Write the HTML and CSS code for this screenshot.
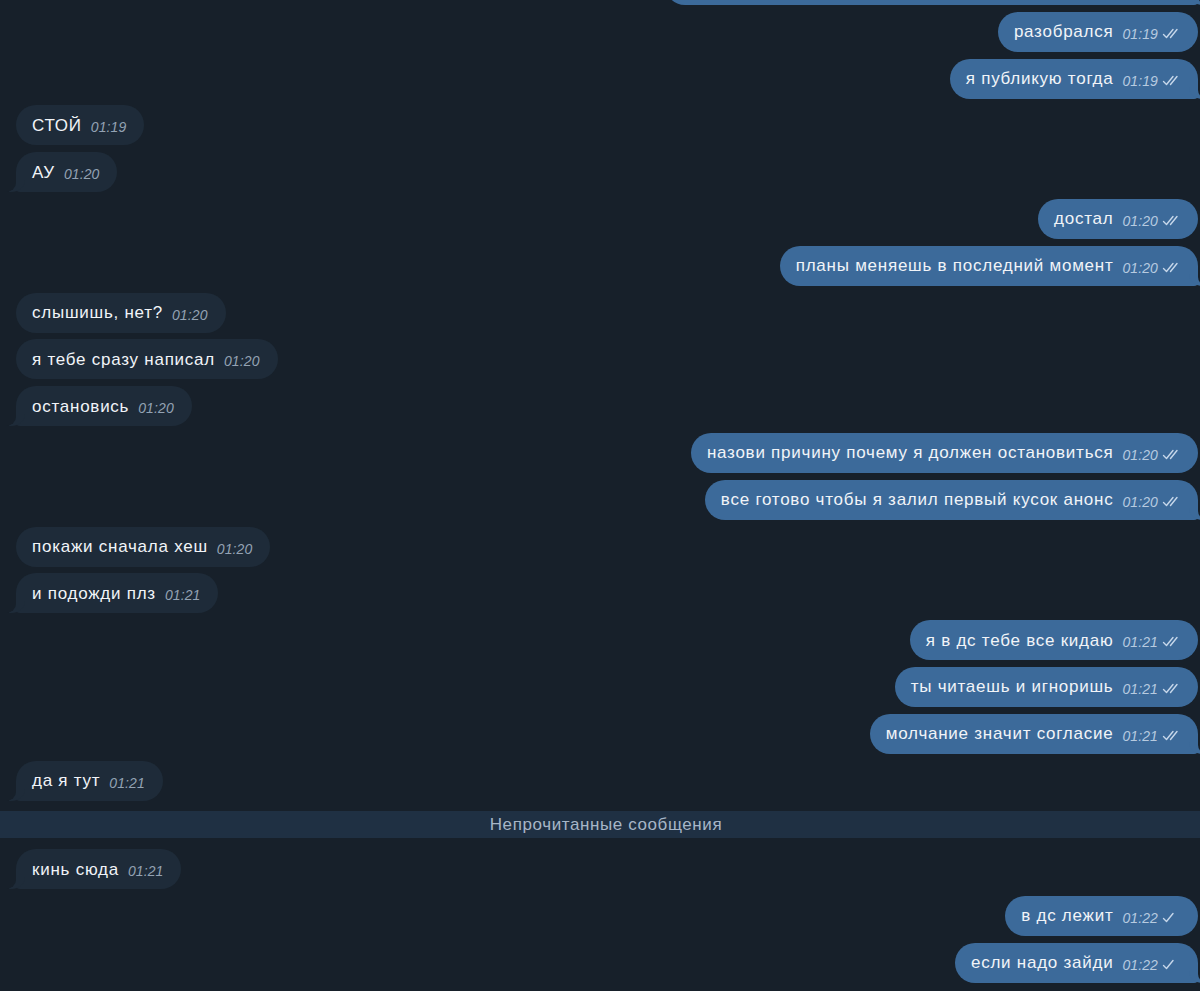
FILE: index.html
```html
<!DOCTYPE html>
<html lang="ru">
<head>
<meta charset="utf-8">
<link rel="stylesheet" href="styles.css">
</head>
<body>
<div class="chat">
  <div class="row out"><div class="bubble partial tail"></div></div>
  <div class="row out"><div class="bubble"><span class="text">разобрался</span><span class="meta"><span class="time">01:19</span><svg class="check" viewBox="0 0 18 12"><path d="M1.5 6.5 L4.5 9.5 L11 1.5"/><path d="M8.5 9.5 L15 1.5"/></svg></span></div></div>
  <div class="row out"><div class="bubble tail"><span class="text">я публикую тогда</span><span class="meta"><span class="time">01:19</span><svg class="check" viewBox="0 0 18 12"><path d="M1.5 6.5 L4.5 9.5 L11 1.5"/><path d="M8.5 9.5 L15 1.5"/></svg></span></div></div>
  <div class="row in"><div class="bubble"><span class="text">СТОЙ</span><span class="meta"><span class="time">01:19</span></span></div></div>
  <div class="row in"><div class="bubble tail"><span class="text">АУ</span><span class="meta"><span class="time">01:20</span></span></div></div>
  <div class="row out"><div class="bubble"><span class="text">достал</span><span class="meta"><span class="time">01:20</span><svg class="check" viewBox="0 0 18 12"><path d="M1.5 6.5 L4.5 9.5 L11 1.5"/><path d="M8.5 9.5 L15 1.5"/></svg></span></div></div>
  <div class="row out"><div class="bubble tail"><span class="text">планы меняешь в последний момент</span><span class="meta"><span class="time">01:20</span><svg class="check" viewBox="0 0 18 12"><path d="M1.5 6.5 L4.5 9.5 L11 1.5"/><path d="M8.5 9.5 L15 1.5"/></svg></span></div></div>
  <div class="row in"><div class="bubble"><span class="text">слышишь, нет?</span><span class="meta"><span class="time">01:20</span></span></div></div>
  <div class="row in"><div class="bubble"><span class="text">я тебе сразу написал</span><span class="meta"><span class="time">01:20</span></span></div></div>
  <div class="row in"><div class="bubble tail"><span class="text">остановись</span><span class="meta"><span class="time">01:20</span></span></div></div>
  <div class="row out"><div class="bubble"><span class="text">назови причину почему я должен остановиться</span><span class="meta"><span class="time">01:20</span><svg class="check" viewBox="0 0 18 12"><path d="M1.5 6.5 L4.5 9.5 L11 1.5"/><path d="M8.5 9.5 L15 1.5"/></svg></span></div></div>
  <div class="row out"><div class="bubble tail"><span class="text">все готово чтобы я залил первый кусок анонс</span><span class="meta"><span class="time">01:20</span><svg class="check" viewBox="0 0 18 12"><path d="M1.5 6.5 L4.5 9.5 L11 1.5"/><path d="M8.5 9.5 L15 1.5"/></svg></span></div></div>
  <div class="row in"><div class="bubble"><span class="text">покажи сначала хеш</span><span class="meta"><span class="time">01:20</span></span></div></div>
  <div class="row in"><div class="bubble tail"><span class="text">и подожди плз</span><span class="meta"><span class="time">01:21</span></span></div></div>
  <div class="row out"><div class="bubble"><span class="text">я в дс тебе все кидаю</span><span class="meta"><span class="time">01:21</span><svg class="check" viewBox="0 0 18 12"><path d="M1.5 6.5 L4.5 9.5 L11 1.5"/><path d="M8.5 9.5 L15 1.5"/></svg></span></div></div>
  <div class="row out"><div class="bubble"><span class="text">ты читаешь и игноришь</span><span class="meta"><span class="time">01:21</span><svg class="check" viewBox="0 0 18 12"><path d="M1.5 6.5 L4.5 9.5 L11 1.5"/><path d="M8.5 9.5 L15 1.5"/></svg></span></div></div>
  <div class="row out"><div class="bubble tail"><span class="text">молчание значит согласие</span><span class="meta"><span class="time">01:21</span><svg class="check" viewBox="0 0 18 12"><path d="M1.5 6.5 L4.5 9.5 L11 1.5"/><path d="M8.5 9.5 L15 1.5"/></svg></span></div></div>
  <div class="row in"><div class="bubble tail"><span class="text">да я тут</span><span class="meta"><span class="time">01:21</span></span></div></div>
  <div class="unread">Непрочитанные сообщения</div>
  <div class="row in"><div class="bubble tail"><span class="text">кинь сюда</span><span class="meta"><span class="time">01:21</span></span></div></div>
  <div class="row out"><div class="bubble"><span class="text">в дс лежит</span><span class="meta"><span class="time">01:22</span><svg class="check" viewBox="0 0 18 12"><path d="M1.5 6.5 L4.5 9.5 L11 1.5"/></svg></span></div></div>
  <div class="row out"><div class="bubble tail"><span class="text">если надо зайди</span><span class="meta"><span class="time">01:22</span><svg class="check" viewBox="0 0 18 12"><path d="M1.5 6.5 L4.5 9.5 L11 1.5"/></svg></span></div></div>
</div>
</body>
</html>
```

FILE: styles.css
```css
html, body {
  margin: 0;
  padding: 0;
  background: #17202a;
  height: 100%;
  overflow: hidden;
}

.chat {
  display: flex;
  flex-direction: column;
  gap: 6.8px;
  margin-top: -35px;
  font-family: "Liberation Sans", Arial, sans-serif;
  font-size: 17px;
  color: #f1f4f8;
}

.row {
  display: flex;
  padding: 0 2px 0 16px;
}

.row.out { justify-content: flex-end; }
.row.in { justify-content: flex-start; }

.bubble {
  position: relative;
  display: flex;
  align-items: center;
  height: 40px;
  box-sizing: border-box;
  padding: 1px 18px 0 16px;
  border-radius: 20px;
  white-space: nowrap;
}

.out .bubble { background: #3c6a9a; }
.in .bubble { background: #1e2b39; }

.partial { width: 533px; }

.text { letter-spacing: 0.75px; }

.meta {
  display: flex;
  align-items: center;
  margin-left: 9px;
  padding-top: 3px;
}

.time {
  font-size: 14px;
  font-style: italic;
  letter-spacing: 0.1px;
}

.out .time { color: #b7cbe0; }
.in .time { color: #93a2b3; }

.check {
  width: 18px;
  height: 12px;
  margin-left: 4px;
  fill: none;
  stroke: #c6d7ea;
  stroke-width: 1.4;
  stroke-linecap: round;
  stroke-linejoin: round;
}

/* tails */
.in .bubble.tail { border-bottom-left-radius: 4px; }
.out .bubble.tail { border-bottom-right-radius: 4px; }

.bubble.tail::before,
.bubble.tail::after {
  content: "";
  position: absolute;
  bottom: 0;
  height: 14px;
}

.in .bubble.tail::before {
  left: -7px;
  width: 16px;
  background: #1e2b39;
  border-bottom-right-radius: 14px 12px;
}
.in .bubble.tail::after {
  left: -12px;
  width: 12px;
  background: #17202a;
  border-bottom-right-radius: 10px 9px;
}

.out .bubble.tail::before {
  right: -7px;
  width: 16px;
  background: #3c6a9a;
  border-bottom-left-radius: 14px 12px;
}
.out .bubble.tail::after {
  right: -12px;
  width: 12px;
  background: #17202a;
  border-bottom-left-radius: 10px 9px;
}

.unread {
  margin: 4px 0;
  height: 27px;
  line-height: 27px;
  padding-left: 12px;
  background: #1f3043;
  color: #a7b6c7;
  text-align: center;
  font-size: 17px;
  letter-spacing: 0.6px;
}
```
